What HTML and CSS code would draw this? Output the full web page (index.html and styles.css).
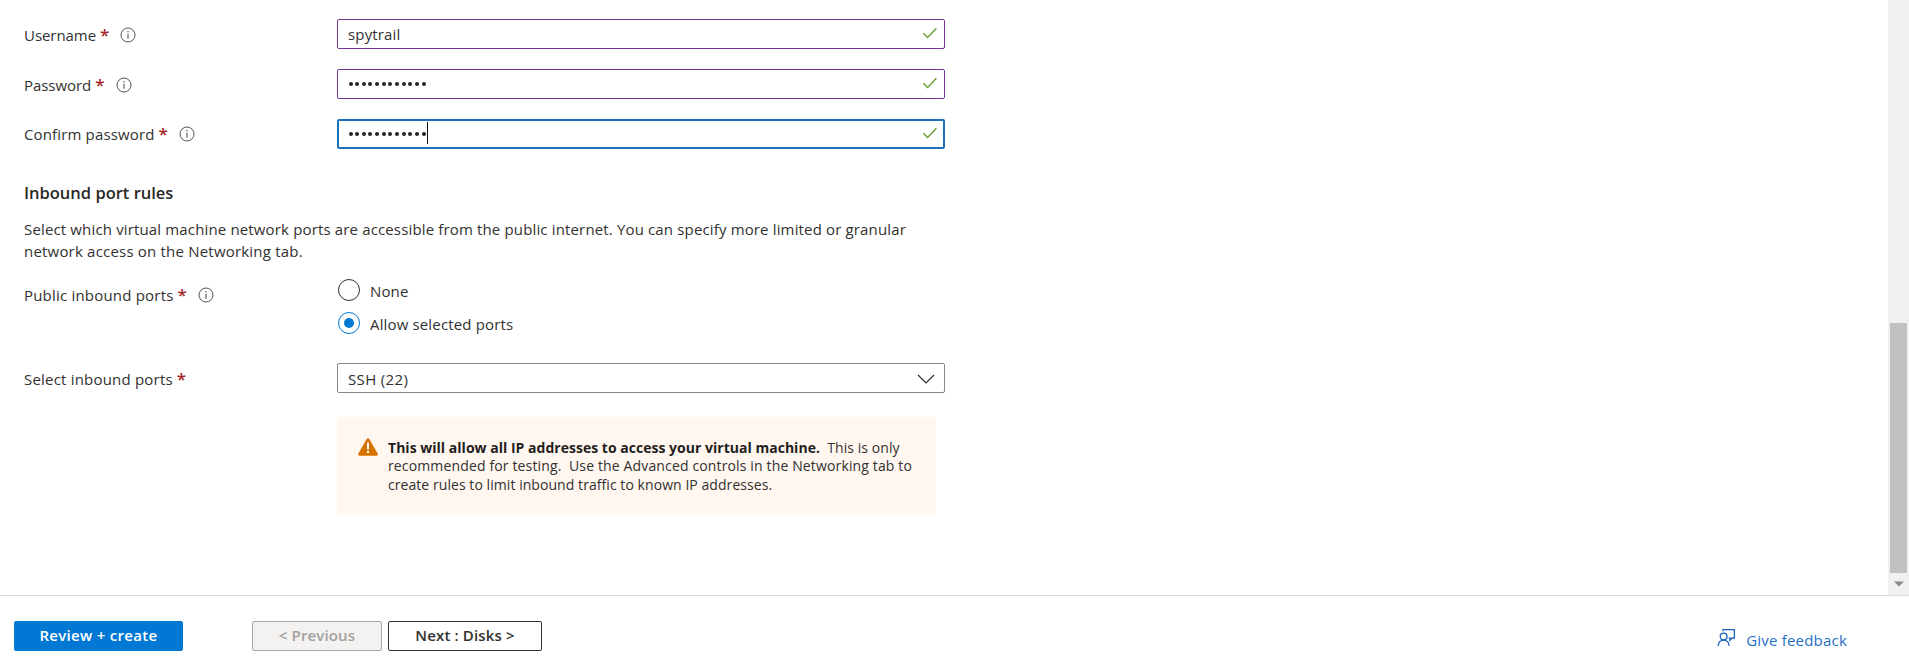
FILE: index.html
```
<!DOCTYPE html>
<html lang="en">
<head>
<meta charset="utf-8">
<title>Create a virtual machine</title>
<link rel="stylesheet" href="styles.css">
</head>
<body>
<svg class="defs" width="0" height="0" aria-hidden="true">
  <symbol id="info" viewBox="0 0 16 16">
    <circle cx="8" cy="8" r="7" fill="none" stroke="#55534f"/>
    <path d="M8 6.8v4.9" stroke="#55534f" stroke-width="1.1"/>
    <circle cx="8" cy="4.8" r=".75" fill="#55534f"/>
  </symbol>
  <symbol id="check" viewBox="0 0 16 12">
    <path d="M1.4 6.2 5.6 10.5 14.4 1.3" fill="none" stroke="#6a9c35" stroke-width="1.4"/>
  </symbol>
</svg>
<div class="blade">
  <main class="form">
    <div class="row">
      <label class="label"><span class="tight">Username</span><b class="req">*</b><svg class="info"><use href="#info"/></svg></label>
      <div class="field valid"><span>spytrail</span><svg class="check"><use href="#check"/></svg></div>
    </div>
    <div class="row">
      <label class="label"><span class="tight">Password</span><b class="req">*</b><svg class="info"><use href="#info"/></svg></label>
      <div class="field valid"><span class="dots"><i></i><i></i><i></i><i></i><i></i><i></i><i></i><i></i><i></i><i></i><i></i><i></i></span><svg class="check"><use href="#check"/></svg></div>
    </div>
    <div class="row">
      <label class="label third">Confirm password<b class="req">*</b><svg class="info"><use href="#info"/></svg></label>
      <div class="field focused"><span class="dots"><i></i><i></i><i></i><i></i><i></i><i></i><i></i><i></i><i></i><i></i><i></i><i></i></span><span class="caret"></span><svg class="check"><use href="#check"/></svg></div>
    </div>

    <h2 class="heading">Inbound port rules</h2>
    <p class="intro">Select which virtual machine network ports are accessible from the public internet. You can specify more limited or granular<br><span class="wide">network access on the Networking tab.</span></p>

    <div class="row ports">
      <label class="label wide">Public inbound ports<b class="req">*</b><svg class="info"><use href="#info"/></svg></label>
      <div class="radios">
        <div class="radio"><span class="ring"></span><span class="radio-text">None</span></div>
        <div class="radio"><span class="ring on"></span><span class="radio-text">Allow selected ports</span></div>
      </div>
    </div>

    <div class="row select-row">
      <label class="label wide">Select inbound ports<b class="req">*</b></label>
      <div class="field select"><span>SSH (22)</span><svg class="chevron" viewBox="0 0 18 10"><path d="M1 1 9 9 17 1" fill="none" stroke="#323130" stroke-width="1.2"/></svg></div>
    </div>

    <div class="warning">
      <svg class="triangle" viewBox="0 0 20 18"><path d="M10 1.7 18.3 16.3H1.7Z" fill="#d67300" stroke="#d67300" stroke-width="3" stroke-linejoin="round"/><path d="M10 4.6v6.6" stroke="#fff" stroke-width="2"/><circle cx="10" cy="13.9" r="1.2" fill="#fff"/></svg>
      <p class="warning-text"><b>This will allow all IP addresses to access your virtual machine.</b>&nbsp; This is only<br><span class="loose">recommended for testing.&nbsp; Use the Advanced controls in the Networking tab to</span><br>create rules to limit inbound traffic to known IP addresses.</p>
    </div>
  </main>
  <div class="scrollbar">
    <div class="thumb"></div>
    <svg class="arrow" viewBox="0 0 10 6"><path d="M0 .5H10L5 5.5Z" fill="#8b8b8b"/></svg>
  </div>
</div>
<footer class="footer">
  <button class="btn primary">Review + create</button>
  <button class="btn previous">&lt; Previous</button>
  <button class="btn next">Next : Disks &gt;</button>
  <a class="feedback">
    <svg class="feedback-icon" viewBox="0 0 20 20" fill="none" stroke="#1c64bd" stroke-width="1.4"><circle cx="7" cy="9" r="3.6"/><path d="M1.2 19c.3-3.8 2.6-6.3 5.8-6.3s5.500 2.500 5.800 6.300M6.200 3.500V1.700H18.300V10.500H16L13.600 13V10.500H12.400"/></svg>
    <span>Give feedback</span>
  </a>
</footer>
</body>
</html>
```
FILE: styles.css
```
* { box-sizing: border-box; }

body {
  margin: 0;
  height: 670px;
  overflow: hidden;
  background: #fff;
  color: #323130;
  font: 15px/22px "Open Sans", "Noto Sans", sans-serif;
  letter-spacing: 0.15px;
}

.defs { position: absolute; }

.blade { display: flex; height: 595px; }

.form { flex: 1; padding: 19px 0 0 24px; }

.row {
  display: grid;
  grid-template-columns: 313px 608px;
  margin-bottom: 20px;
}

.label {
  display: flex;
  align-items: center;
  height: 32px;
  margin-bottom: -2px;
}
.label.third { height: 30px; margin-bottom: 0; }
.wide { letter-spacing: 0.2px; }
.tight { letter-spacing: -0.05px; }

.req {
  margin-left: 4px;
  color: #a4262c;
  font-size: 17px;
  font-weight: 600;
  letter-spacing: 0;
}

.info { width: 16px; height: 16px; margin-left: 11px; }

.field {
  display: flex;
  align-items: center;
  height: 30px;
  padding: 0 6px 0 10px;
  border: 1px solid #8a8886;
  border-radius: 2px;
}
.field.valid { border-color: #7b3495; }
.field.focused { border: 2px solid #1a72bd; padding: 0 5px 0 9px; }

.check { width: 16px; height: 12px; margin: -2px 0 0 auto; }

.dots { display: flex; gap: 2.65px; margin-left: 0.5px; }
.dots i { width: 4px; height: 4px; border-radius: 50%; background: #252423; }
.caret { width: 1px; height: 22px; margin: -3px 0 0 1px; background: #111; }

.heading {
  margin: 32px 0 13px;
  font-size: 16.5px;
  font-weight: 600;
  line-height: 24px;
  letter-spacing: 0;
  color: #292827;
}

.intro { margin: 0 0 17px; white-space: nowrap; }

.ports { margin-bottom: 29px; }
.ports .label { height: 22px; margin-top: 5px; }

.radios { display: flex; flex-direction: column; gap: 11px; }
.radio { display: flex; gap: 10px; height: 22px; padding-left: 1px; }
.radio-text { padding-top: 1px; }
.ring {
  display: grid;
  place-items: center;
  width: 22px;
  height: 22px;
  border: 1px solid #323130;
  border-radius: 50%;
}
.ring.on { border-color: #0078d4; }
.ring.on::after {
  content: "";
  width: 10px;
  height: 10px;
  border-radius: 50%;
  background: #0078d4;
}

.select-row { margin-bottom: 24px; }
.select { padding: 1px 9px 0 10px; letter-spacing: 0.35px; }
.chevron { width: 18px; height: 10px; margin-left: auto; }

.warning {
  display: flex;
  gap: 10px;
  width: 599px;
  height: 98px;
  margin-left: 313px;
  padding: 21px 0 0 21px;
  background: #fff7f0;
}
.triangle { width: 20px; height: 18px; }
.warning-text {
  margin: 0;
  padding-top: 0.5px;
  font-size: 14px;
  line-height: 18.5px;
  letter-spacing: 0.06px;
  white-space: nowrap;
}
.warning-text b { color: #1f1e1d; letter-spacing: 0.02px; }
.loose { letter-spacing: 0.14px; }

.scrollbar {
  display: flex;
  flex-direction: column;
  align-items: center;
  width: 21px;
  background: #f1f1f1;
}
.thumb { width: 17px; height: 250px; margin-top: 323px; background: #c1c1c1; }
.arrow { width: 10px; height: 6px; margin-top: 8px; }

.footer {
  display: flex;
  align-items: flex-start;
  height: 75px;
  padding: 25px 62px 0 14px;
  border-top: 1px solid #dcdcdc;
}

.btn {
  height: 30px;
  padding: 0 0 2px;
  border: 1px solid #323130;
  border-radius: 2px;
  background: #fff;
  color: #323130;
  font: 600 15px/22px "Open Sans", "Noto Sans", sans-serif;
  letter-spacing: 0.15px;
}
.btn.primary { width: 169px; border-color: #0078d4; background: #0078d4; color: #fff; letter-spacing: 0.3px; }
.btn.previous { width: 130px; margin-left: 69px; border-color: #a9a7a5; background: #f3f2f1; color: #a19f9d; }
.btn.next { width: 154px; margin-left: 6px; }

.feedback {
  display: flex;
  align-items: center;
  gap: 10px;
  margin: 8px 0 0 auto;
  color: #1f6fc4;
  letter-spacing: 0.2px;
}
.feedback-icon { width: 19px; height: 19px; margin-top: -5px; }
```
